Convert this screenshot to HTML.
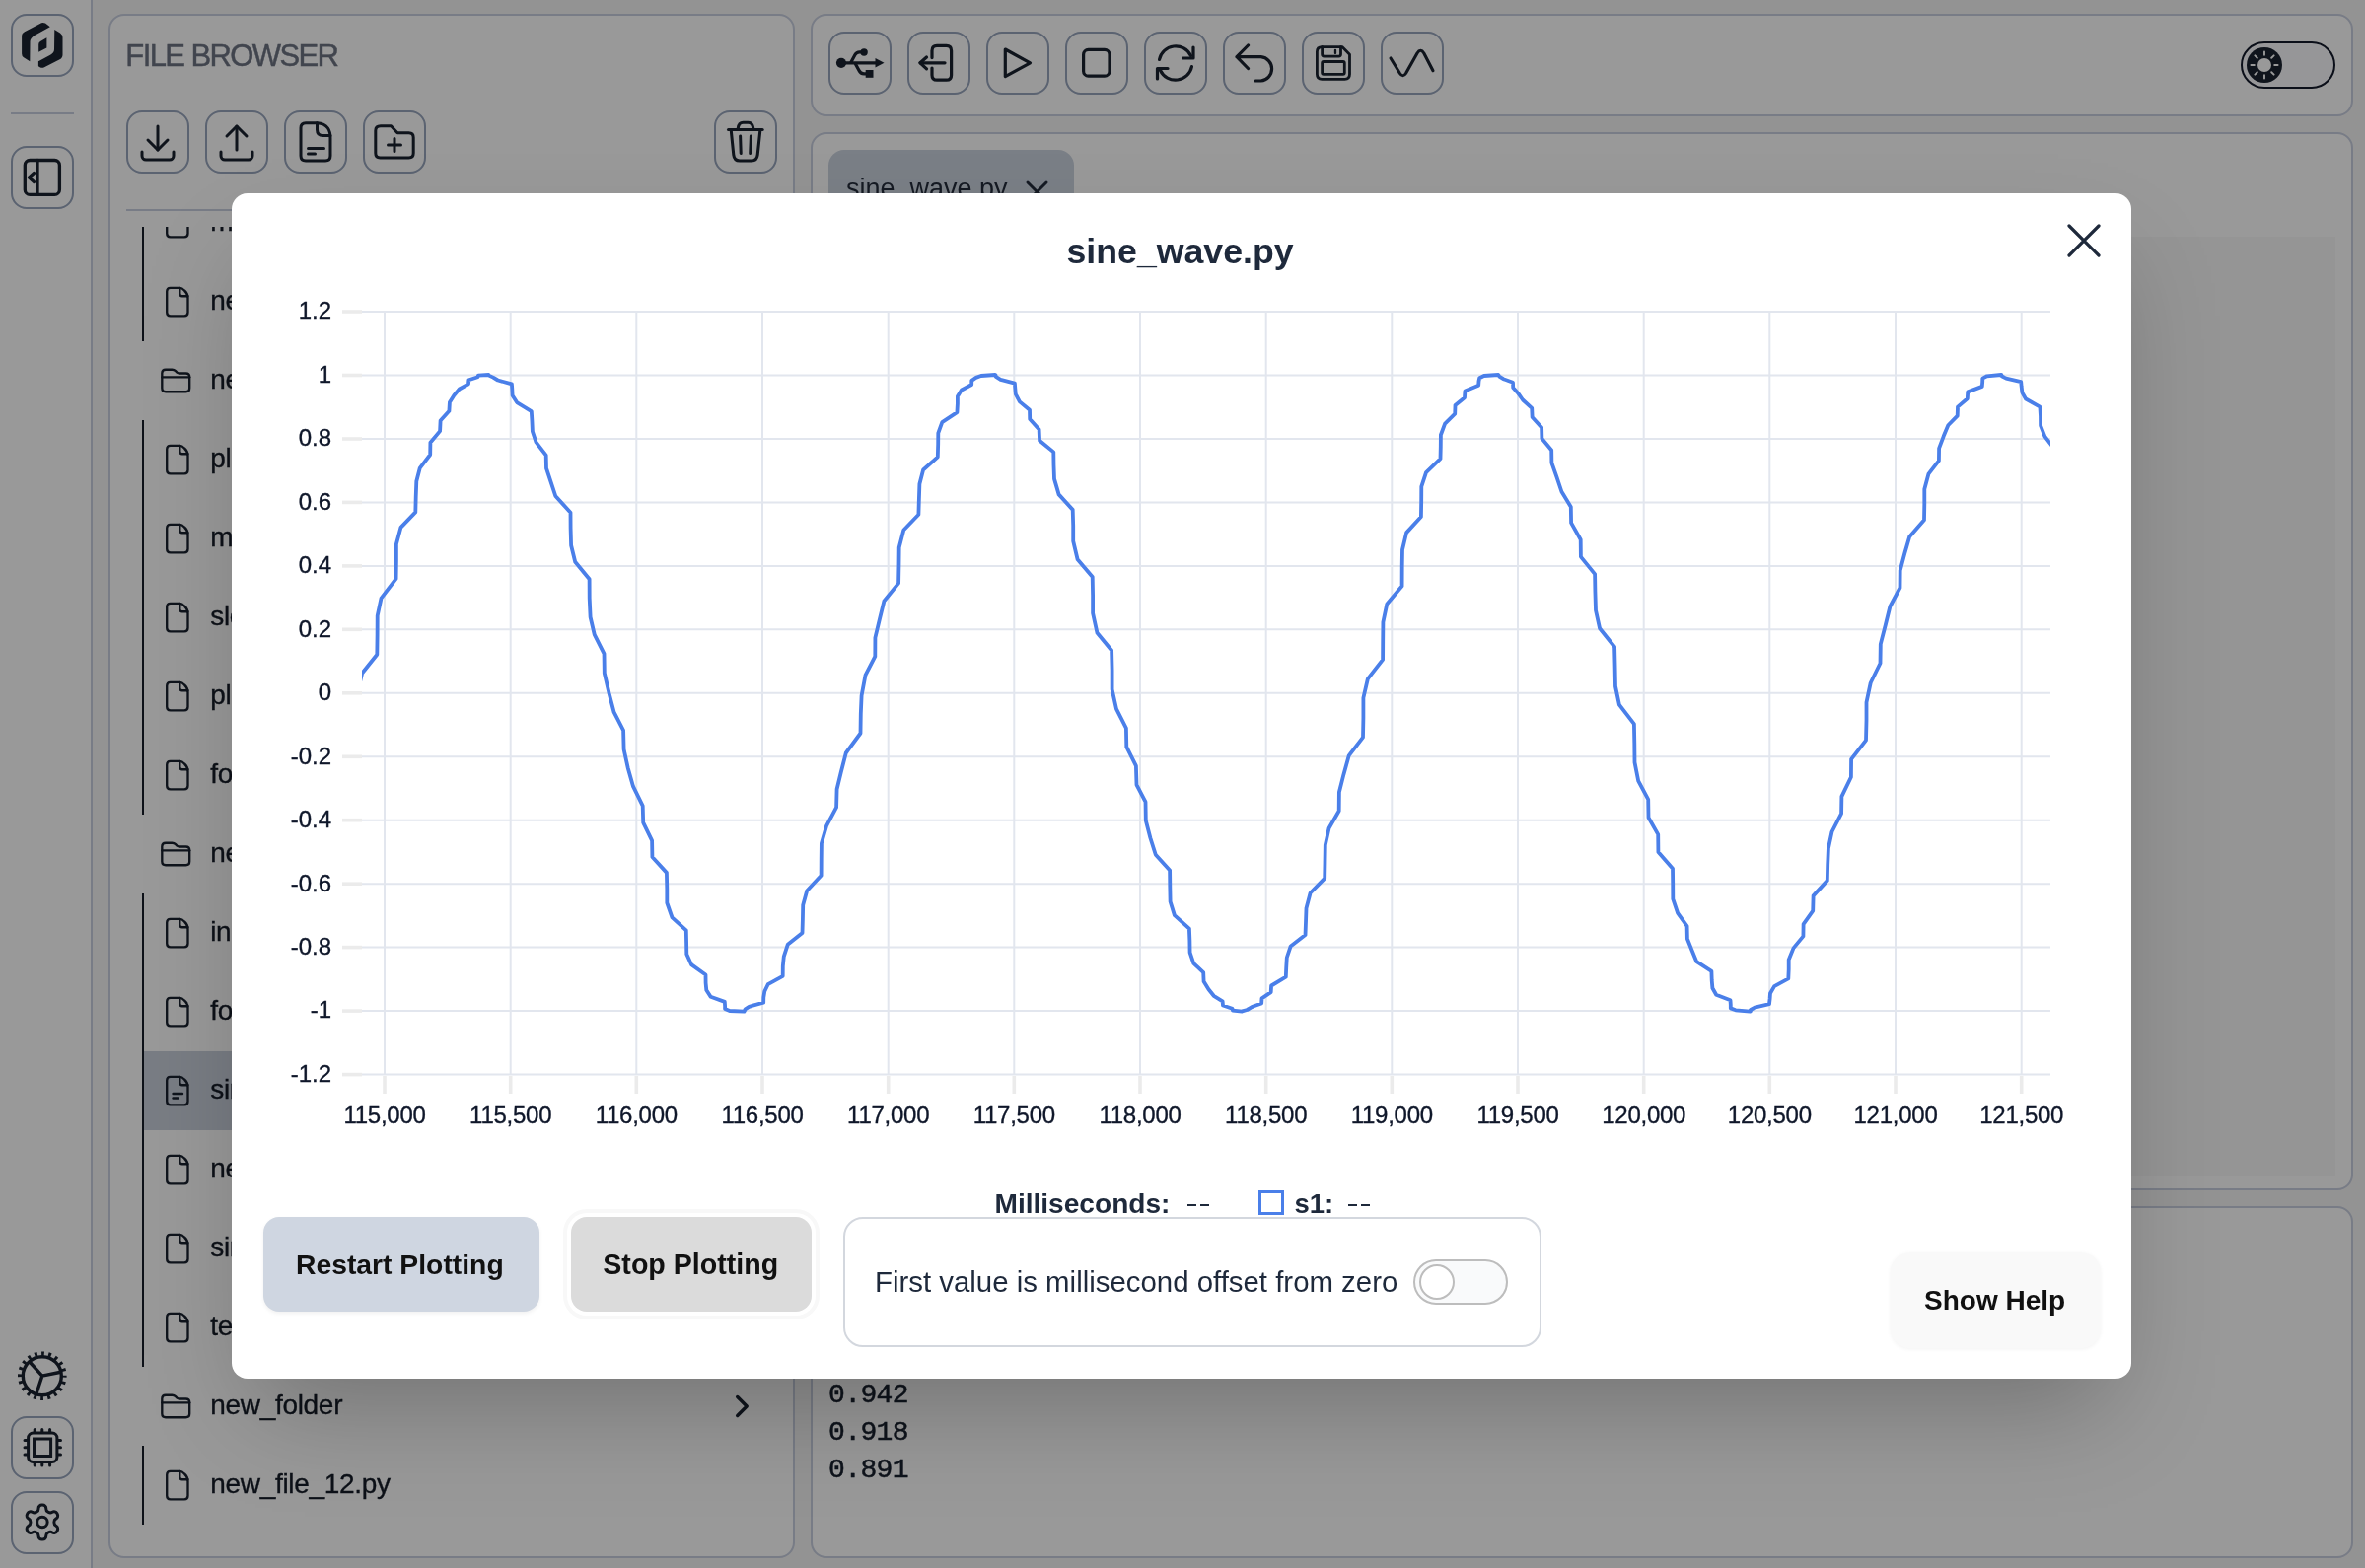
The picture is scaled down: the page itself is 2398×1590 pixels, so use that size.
<!DOCTYPE html>
<html><head><meta charset="utf-8"><style>
html,body{margin:0;padding:0;}
body{width:2398px;height:1590px;overflow:hidden;position:relative;-webkit-font-smoothing:antialiased;background:#939393;font-family:"Liberation Sans",sans-serif;}
.panel{position:absolute;background:#999999;border:2px solid #787c86;}
.ob{position:absolute;border:2px solid #5b6371;}
.t{position:absolute;white-space:nowrap;line-height:1;font-family:"Liberation Sans",sans-serif;}
.mono{font-family:"Liberation Mono",monospace;}
</style></head><body><div id="root" style="position:absolute;left:0;top:0;width:2398px;height:1590px;will-change:transform">
<div style="position:absolute;left:0;top:0;width:92px;height:1590px;background:#999999;border-right:2px solid #787c86"></div><div class="panel" style="left:110px;top:14px;width:692px;height:1562px;border-radius:16px"></div><div class="panel" style="left:822px;top:14px;width:1560px;height:100px;border-radius:16px"></div><div class="panel" style="left:822px;top:134px;width:1560px;height:1069px;border-radius:16px"></div><div class="panel" style="left:822px;top:1223px;width:1560px;height:353px;border-radius:16px"></div><div style="position:absolute;left:840px;top:240px;width:1528px;height:953px;background:#959595"></div><div style="position:absolute;left:840px;top:152px;width:249px;height:70px;background:#7a7f86;border-radius:16px 16px 0 0"></div><div class="t" style="left:858px;top:177.64px;font-size:27px;font-weight:400;color:#151a23;">sine_wave.py</div><svg style="position:absolute;left:1030px;top:175px" width="40" height="40"><path d="M12 10 L31 29 M31 10 L12 29" stroke="#151a23" stroke-width="3" stroke-linecap="round"/></svg><div class="ob" style="left:11px;top:14px;width:60px;height:60px;border-radius:16px"></div><div class="ob" style="left:11px;top:148px;width:60px;height:60px;border-radius:16px"></div><div class="ob" style="left:11px;top:1436px;width:60px;height:60px;border-radius:16px"></div><div class="ob" style="left:11px;top:1512px;width:60px;height:60px;border-radius:16px"></div><div style="position:absolute;left:11px;top:114px;width:64px;height:2px;background:#787c86"></div><div class="t" style="left:127.3px;top:40.76px;font-size:31px;font-weight:400;color:#41454e;letter-spacing:-1.6px;-webkit-text-stroke:0.45px #41454e;">FILE BROWSER</div><div class="ob" style="left:128px;top:112px;width:60px;height:60px;border-radius:16px"></div><div class="ob" style="left:208px;top:112px;width:60px;height:60px;border-radius:16px"></div><div class="ob" style="left:288px;top:112px;width:60px;height:60px;border-radius:16px"></div><div class="ob" style="left:368px;top:112px;width:60px;height:60px;border-radius:16px"></div><div class="ob" style="left:724px;top:112px;width:60px;height:60px;border-radius:16px"></div><div style="position:absolute;left:128px;top:212px;width:660px;height:2px;background:#787c86"></div><div style="position:absolute;left:112px;top:230px;width:692px;height:1340px;overflow:hidden"><div style="position:absolute;left:-112px;top:-230px;width:2398px;height:1590px"><div class="t" style="left:213.2px;top:210.90px;font-size:28px;font-weight:400;color:#0d1118;letter-spacing:-0.3px;-webkit-text-stroke:0.35px #0d1118;">main.py</div><div class="t" style="left:213.2px;top:290.90px;font-size:28px;font-weight:400;color:#0d1118;letter-spacing:-0.3px;-webkit-text-stroke:0.35px #0d1118;">new_file_3.py</div><div class="t" style="left:213.2px;top:370.90px;font-size:28px;font-weight:400;color:#0d1118;letter-spacing:-0.3px;-webkit-text-stroke:0.35px #0d1118;">new_folder_2</div><div class="t" style="left:213.2px;top:450.90px;font-size:28px;font-weight:400;color:#0d1118;letter-spacing:-0.3px;-webkit-text-stroke:0.35px #0d1118;">plot_test.py</div><div class="t" style="left:213.2px;top:530.90px;font-size:28px;font-weight:400;color:#0d1118;letter-spacing:-0.3px;-webkit-text-stroke:0.35px #0d1118;">main.py</div><div class="t" style="left:213.2px;top:610.90px;font-size:28px;font-weight:400;color:#0d1118;letter-spacing:-0.3px;-webkit-text-stroke:0.35px #0d1118;">slow_sine.py</div><div class="t" style="left:213.2px;top:690.90px;font-size:28px;font-weight:400;color:#0d1118;letter-spacing:-0.3px;-webkit-text-stroke:0.35px #0d1118;">plotter.py</div><div class="t" style="left:213.2px;top:770.90px;font-size:28px;font-weight:400;color:#0d1118;letter-spacing:-0.3px;-webkit-text-stroke:0.35px #0d1118;">foo.py</div><div class="t" style="left:213.2px;top:850.90px;font-size:28px;font-weight:400;color:#0d1118;letter-spacing:-0.3px;-webkit-text-stroke:0.35px #0d1118;">new_folder_3</div><div class="t" style="left:213.2px;top:930.90px;font-size:28px;font-weight:400;color:#0d1118;letter-spacing:-0.3px;-webkit-text-stroke:0.35px #0d1118;">index.py</div><div class="t" style="left:213.2px;top:1010.90px;font-size:28px;font-weight:400;color:#0d1118;letter-spacing:-0.3px;-webkit-text-stroke:0.35px #0d1118;">foo2.py</div><div style="position:absolute;left:146px;top:1066px;width:658px;height:80px;background:#797d84"></div><div class="t" style="left:213.2px;top:1090.90px;font-size:28px;font-weight:400;color:#0d1118;letter-spacing:-0.3px;-webkit-text-stroke:0.35px #0d1118;">sine_wave.py</div><div class="t" style="left:213.2px;top:1170.90px;font-size:28px;font-weight:400;color:#0d1118;letter-spacing:-0.3px;-webkit-text-stroke:0.35px #0d1118;">new_file.py</div><div class="t" style="left:213.2px;top:1250.90px;font-size:28px;font-weight:400;color:#0d1118;letter-spacing:-0.3px;-webkit-text-stroke:0.35px #0d1118;">sine2.py</div><div class="t" style="left:213.2px;top:1330.90px;font-size:28px;font-weight:400;color:#0d1118;letter-spacing:-0.3px;-webkit-text-stroke:0.35px #0d1118;">test.py</div><div class="t" style="left:213.2px;top:1410.90px;font-size:28px;font-weight:400;color:#0d1118;letter-spacing:-0.3px;-webkit-text-stroke:0.35px #0d1118;">new_folder</div><div class="t" style="left:213.2px;top:1490.90px;font-size:28px;font-weight:400;color:#0d1118;letter-spacing:-0.3px;-webkit-text-stroke:0.35px #0d1118;">new_file_12.py</div><div style="position:absolute;left:144px;top:186px;width:2px;height:160px;background:#0d1118"></div><div style="position:absolute;left:144px;top:426px;width:2px;height:400px;background:#0d1118"></div><div style="position:absolute;left:144px;top:906px;width:2px;height:480px;background:#0d1118"></div><div style="position:absolute;left:144px;top:1466px;width:2px;height:80px;background:#0d1118"></div></div></div><div class="ob" style="left:840px;top:32px;width:60px;height:60px;border-radius:16px"></div><div class="ob" style="left:920px;top:32px;width:60px;height:60px;border-radius:16px"></div><div class="ob" style="left:1000px;top:32px;width:60px;height:60px;border-radius:16px"></div><div class="ob" style="left:1080px;top:32px;width:60px;height:60px;border-radius:16px"></div><div class="ob" style="left:1160px;top:32px;width:60px;height:60px;border-radius:16px"></div><div class="ob" style="left:1240px;top:32px;width:60px;height:60px;border-radius:16px"></div><div class="ob" style="left:1320px;top:32px;width:60px;height:60px;border-radius:16px"></div><div class="ob" style="left:1400px;top:32px;width:60px;height:60px;border-radius:16px"></div><div style="position:absolute;left:2272px;top:42px;width:92px;height:44px;border:2px solid #0b0f19;border-radius:24px;background:#969698"></div><div class="t mono" style="left:840px;top:1400.54px;font-size:28px;font-weight:400;color:#0f141c;-webkit-text-stroke:0.5px #0f141c;letter-spacing:-0.6px;">0.942</div><div class="t mono" style="left:840px;top:1439.14px;font-size:28px;font-weight:400;color:#0f141c;-webkit-text-stroke:0.5px #0f141c;letter-spacing:-0.6px;">0.918</div><div class="t mono" style="left:840px;top:1476.94px;font-size:28px;font-weight:400;color:#0f141c;-webkit-text-stroke:0.5px #0f141c;letter-spacing:-0.6px;">0.891</div><svg style="position:absolute;left:0;top:0" width="2398" height="1590"><defs><clipPath id="fl"><rect x="112" y="230" width="692" height="1340"/></clipPath></defs><g transform="translate(136,120) scale(2)" stroke="#0f141c" fill="none" stroke-width="1.5" stroke-linecap="round" stroke-linejoin="round"><path d="M4 17v2a2 2 0 0 0 2 2h12a2 2 0 0 0 2 -2v-2"/><path d="M7 11l5 5l5 -5"/><path d="M12 4l0 12"/></g><g transform="translate(216,120) scale(2)" stroke="#0f141c" fill="none" stroke-width="1.5" stroke-linecap="round" stroke-linejoin="round"><path d="M4 17v2a2 2 0 0 0 2 2h12a2 2 0 0 0 2 -2v-2"/><path d="M7 9l5 -5l5 5"/><path d="M12 4l0 12"/></g><g stroke="#0f141c" fill="none" stroke-width="3" stroke-linecap="round" stroke-linejoin="round"><path d="M330 163 H310 Q305 163 305 158 V129.7 Q305 124.7 310 124.7 H321.5 Q329 125 332.5 130 Q335 133.5 335 140 V158 Q335 163 330 163 Z"/><path d="M321.5 124.7 V131.5 Q321.5 137.5 327.5 137.5 H335"/><path d="M312.5 150.5 H328.5"/><path d="M312.5 156 H319.5"/></g><g stroke="#0f141c" fill="none" stroke-width="3" stroke-linecap="round" stroke-linejoin="round"><path d="M386 127.8 H396.5 L403 134.7 H414.5 Q419.2 134.7 419.2 139.4 V155.3 Q419.2 160 414.5 160 H385.5 Q380.8 160 380.8 155.3 V132.5 Q380.8 127.8 386 127.8 Z"/><path d="M393.5 147 H406.5 M400 140.5 V153.5"/></g><g stroke="#0f141c" fill="none" stroke-width="3" stroke-linecap="round" stroke-linejoin="round"><path d="M738.5 131.6 H773.2"/><path d="M741.3 132.5 L743.8 157 Q744.5 163 750 163 H762 Q767.5 163 768.2 157 L770.8 132.5"/><path d="M750.6 138 L751.2 155.5 M761.4 138 L760.7 155.5"/><path d="M748.3 130 Q749 124.3 753.5 124.3 H758.5 Q763 124.3 763.7 130"/></g><g stroke="#0f141c" fill="none" stroke-width="3.3" stroke-linecap="round" stroke-linejoin="round"><rect x="25.3" y="162.5" width="35.1" height="34.9" rx="5"/><path d="M38 162.5V197.4"/><path d="M34.5 175.5L29.5 180L34.5 184.5"/></g><g stroke="#0f141c" fill="none" stroke-width="3" stroke-linecap="round" stroke-linejoin="round"><rect x="28.6" y="1453" width="29.3" height="29.4" rx="5"/><rect x="34.5" y="1459" width="17.1" height="17.5" stroke-linejoin="miter"/><path d="M35.2 1449.5V1452 M42.8 1449.5V1452 M50.6 1449.5V1452 M35.2 1483.5V1486 M42.8 1483.5V1486 M50.6 1483.5V1486 M25 1460.4H27.5 M25 1467.8H27.5 M25 1475.1H27.5 M59 1460.4H61.5 M59 1467.8H61.5 M59 1475.1H61.5"/></g><g transform="translate(21.9,1522.6) scale(1.75)" stroke="#0f141c" fill="none" stroke-width="1.5" stroke-linecap="round" stroke-linejoin="round"><g stroke-width="1.7"><path d="M12.22 2h-.44a2 2 0 0 0-2 2v.18a2 2 0 0 1-1 1.73l-.43.25a2 2 0 0 1-2 0l-.15-.08a2 2 0 0 0-2.73.73l-.22.38a2 2 0 0 0 .73 2.73l.15.1a2 2 0 0 1 1 1.72v.51a2 2 0 0 1-1 1.74l-.15.09a2 2 0 0 0-.73 2.73l.22.38a2 2 0 0 0 2.73.73l.15-.08a2 2 0 0 1 2 0l.43.25a2 2 0 0 1 1 1.73V20a2 2 0 0 0 2 2h.44a2 2 0 0 0 2-2v-.18a2 2 0 0 1 1-1.73l.43-.25a2 2 0 0 1 2 0l.15.08a2 2 0 0 0 2.73-.73l.22-.39a2 2 0 0 0-.73-2.73l-.15-.08a2 2 0 0 1-1-1.74v-.5a2 2 0 0 1 1-1.74l.15-.09a2 2 0 0 0 .73-2.73l-.22-.38a2 2 0 0 0-2.73-.73l-.15.08a2 2 0 0 1-2 0l-.43-.25a2 2 0 0 1-1-1.73V4a2 2 0 0 0-2-2z"/><circle cx="12" cy="12" r="3"/></g></g><g stroke="#0f141c" fill="none" stroke-width="3.2" stroke-linecap="round" stroke-linejoin="round"><path d="M1019.3 50 L1044.5 63.8 L1019.3 77.6 Z"/></g><g stroke="#0f141c" fill="none" stroke-width="3.2" stroke-linecap="round" stroke-linejoin="round"><rect x="1098.6" y="50.4" width="26.4" height="26.8" rx="5"/></g><g stroke="#0f141c" fill="none" stroke-width="3.2" stroke-linecap="round" stroke-linejoin="round"><path d="M945 58.6 V51.4 Q945 46.4 950 46.4 H959.6 Q964.6 46.4 964.6 51.4 V76.2 Q964.6 81.2 959.6 81.2 H950 Q945 81.2 945 76.2 V69"/><path d="M933 63.8 H958"/><path d="M939.5 58 L933 63.8 L939.5 69.9"/></g><g stroke="#0f141c" fill="none" stroke-width="3.2" stroke-linecap="round" stroke-linejoin="round"><path d="M1175.5 60.5 A17 17 0 0 1 1207.5 56.5"/><path d="M1210 48 V59 H1199.5"/><path d="M1208.5 67.5 A17 17 0 0 1 1176.5 71.5"/><path d="M1173.5 80 V69.5 H1184"/></g><g stroke="#0f141c" fill="none" stroke-width="3.2" stroke-linecap="round" stroke-linejoin="round"><path d="M1265.5 46 L1254 57.7 L1265.5 69.5 M1254 57.7 H1278.5 A12.2 12.2 0 0 1 1278.5 82 H1273"/></g><g stroke="#0f141c" fill="none" stroke-width="2.8" stroke-linecap="round" stroke-linejoin="round"><path d="M1340.4 47.6 H1360.9 L1368.5 55.2 V75.3 Q1368.5 80.3 1363.5 80.3 H1340.4 Q1335.4 80.3 1335.4 75.3 V52.6 Q1335.4 47.6 1340.4 47.6 Z"/><path d="M1340.6 47.6 V55.1 Q1340.6 57.1 1342.6 57.1 H1357.5 Q1359.5 57.1 1359.5 55.1 V47.6"/><path d="M1354 51 V54" stroke-width="2.3"/><rect x="1340.6" y="62.5" width="22.7" height="12.8" rx="1.5"/></g><g stroke="#0f141c" fill="none" stroke-width="3.1" stroke-linecap="round" stroke-linejoin="round"><path d="M1410 59 L1419.5 74.5 Q1422.5 79 1425.5 74.5 L1437 54 Q1440.4 48.5 1443.8 54 L1453 71.7"/></g><g fill="#0f141c" stroke="#0f141c" stroke-width="3.2"><circle cx="853" cy="63.8" r="5.1" stroke="none"/><path d="M853 63.8H889" fill="none"/><path d="M887.5 59 L896.5 63.8 L887.5 68.6z" stroke="none"/><circle cx="876.1" cy="53" r="3.7" stroke="none"/><path d="M862.7 63.5 L867 55.5 Q868.5 52.8 871.5 52.8 H874" fill="none"/><path d="M867.2 64.5 L871 71.5 Q872.5 74.8 876 74.8 H878" fill="none"/><rect x="877.7" y="71" width="7.8" height="7.8" stroke="none"/></g><g fill="#0f141c"><path d="M24.9 32.3 L42.1 23.2 Q44 22.6 46 23.6 L50.8 27.2 L34.9 35.9 Q30.6 38.6 30.5 42 L30.3 62.3 L24 58.3 Q22.1 57 22.1 54.5 L22.1 36 Q22.1 33.8 24.9 32.3 Z"/><path d="M55.3 30 L61 33.5 Q63.5 35.5 63.5 38 L63.5 55.5 Q63.5 58.8 60.6 60.3 L45 68.3 Q43 69.3 41 68.5 L38.9 67.3 L38.9 62.3 L51 55.8 Q55 53.5 55 50 L55.3 30 Z"/><path d="M39.2 45 Q39.2 43 41 42 L47.4 38.2 L47.4 48.4 L39.2 52.8 Z"/></g><circle cx="2296" cy="66" r="18" fill="#0f141c"/><circle cx="2296" cy="66" r="7" fill="#999"/><path d="M2306.20 66.00L2309.60 66.00M2303.21 73.21L2305.62 75.62M2296.00 76.20L2296.00 79.60M2288.79 73.21L2286.38 75.62M2285.80 66.00L2282.40 66.00M2288.79 58.79L2286.38 56.38M2296.00 55.80L2296.00 52.40M2303.21 58.79L2305.62 56.38" stroke="#999" stroke-width="1.9" stroke-linecap="round"/><g stroke="#0f141c" fill="none"><circle cx="42.8" cy="1395.2" r="19.5" stroke-width="3.4"/><circle cx="42.8" cy="1395.2" r="22.6" stroke-width="4.4" stroke-dasharray="2.8 4.3" stroke-dashoffset="1.4"/><path d="M42.8 1395.2 L30 1381 M42.8 1395.2 L60.5 1391.5 M42.8 1395.2 L37 1413" stroke-width="3.4" stroke-linecap="round"/></g><g clip-path="url(#fl)"><g stroke="#0f141c" fill="none" stroke-width="2.35" stroke-linecap="round" stroke-linejoin="round"><path d="M182.3 211.9 H172.7 Q169.2 211.9 169.2 215.4 V236.8 Q169.2 240.3 172.7 240.3 H187 Q190.5 240.3 190.5 236.8 V222 Q190.5 217.5 187 214.5 Q184.5 211.9 182.3 211.9 Z"/><path d="M182.3 211.9 V217.7 Q182.3 220.2 184.8 220.2 H190.5"/></g><g stroke="#0f141c" fill="none" stroke-width="2.35" stroke-linecap="round" stroke-linejoin="round"><path d="M182.3 291.9 H172.7 Q169.2 291.9 169.2 295.4 V316.8 Q169.2 320.3 172.7 320.3 H187 Q190.5 320.3 190.5 316.8 V302 Q190.5 297.5 187 294.5 Q184.5 291.9 182.3 291.9 Z"/><path d="M182.3 291.9 V297.7 Q182.3 300.2 184.8 300.2 H190.5"/></g><g stroke="#0f141c" fill="none" stroke-width="2.35" stroke-linecap="round" stroke-linejoin="round" transform="translate(0,0)"><path d="M164.3 382 V378.3 Q164.3 374.7 168 374.7 H174.5 Q176.5 374.7 178 376.2 L179.5 377.7 Q180.5 378.5 182 378.5 H188.5 Q192.2 378.5 192.2 382 V393.5 Q192.2 397.2 188.5 397.2 H168 Q164.3 397.2 164.3 393.5 Z"/><path d="M164.3 382.3 H192.2"/></g><g stroke="#0f141c" fill="none" stroke-width="2.35" stroke-linecap="round" stroke-linejoin="round"><path d="M182.3 451.9 H172.7 Q169.2 451.9 169.2 455.4 V476.8 Q169.2 480.3 172.7 480.3 H187 Q190.5 480.3 190.5 476.8 V462 Q190.5 457.5 187 454.5 Q184.5 451.9 182.3 451.9 Z"/><path d="M182.3 451.9 V457.7 Q182.3 460.2 184.8 460.2 H190.5"/></g><g stroke="#0f141c" fill="none" stroke-width="2.35" stroke-linecap="round" stroke-linejoin="round"><path d="M182.3 531.9 H172.7 Q169.2 531.9 169.2 535.4 V556.8 Q169.2 560.3 172.7 560.3 H187 Q190.5 560.3 190.5 556.8 V542 Q190.5 537.5 187 534.5 Q184.5 531.9 182.3 531.9 Z"/><path d="M182.3 531.9 V537.7 Q182.3 540.2 184.8 540.2 H190.5"/></g><g stroke="#0f141c" fill="none" stroke-width="2.35" stroke-linecap="round" stroke-linejoin="round"><path d="M182.3 611.9 H172.7 Q169.2 611.9 169.2 615.4 V636.8 Q169.2 640.3 172.7 640.3 H187 Q190.5 640.3 190.5 636.8 V622 Q190.5 617.5 187 614.5 Q184.5 611.9 182.3 611.9 Z"/><path d="M182.3 611.9 V617.7 Q182.3 620.2 184.8 620.2 H190.5"/></g><g stroke="#0f141c" fill="none" stroke-width="2.35" stroke-linecap="round" stroke-linejoin="round"><path d="M182.3 691.9 H172.7 Q169.2 691.9 169.2 695.4 V716.8 Q169.2 720.3 172.7 720.3 H187 Q190.5 720.3 190.5 716.8 V702 Q190.5 697.5 187 694.5 Q184.5 691.9 182.3 691.9 Z"/><path d="M182.3 691.9 V697.7 Q182.3 700.2 184.8 700.2 H190.5"/></g><g stroke="#0f141c" fill="none" stroke-width="2.35" stroke-linecap="round" stroke-linejoin="round"><path d="M182.3 771.9 H172.7 Q169.2 771.9 169.2 775.4 V796.8 Q169.2 800.3 172.7 800.3 H187 Q190.5 800.3 190.5 796.8 V782 Q190.5 777.5 187 774.5 Q184.5 771.9 182.3 771.9 Z"/><path d="M182.3 771.9 V777.7 Q182.3 780.2 184.8 780.2 H190.5"/></g><g stroke="#0f141c" fill="none" stroke-width="2.35" stroke-linecap="round" stroke-linejoin="round" transform="translate(0,480)"><path d="M164.3 382 V378.3 Q164.3 374.7 168 374.7 H174.5 Q176.5 374.7 178 376.2 L179.5 377.7 Q180.5 378.5 182 378.5 H188.5 Q192.2 378.5 192.2 382 V393.5 Q192.2 397.2 188.5 397.2 H168 Q164.3 397.2 164.3 393.5 Z"/><path d="M164.3 382.3 H192.2"/></g><g stroke="#0f141c" fill="none" stroke-width="2.35" stroke-linecap="round" stroke-linejoin="round"><path d="M182.3 931.9 H172.7 Q169.2 931.9 169.2 935.4 V956.8 Q169.2 960.3 172.7 960.3 H187 Q190.5 960.3 190.5 956.8 V942 Q190.5 937.5 187 934.5 Q184.5 931.9 182.3 931.9 Z"/><path d="M182.3 931.9 V937.7 Q182.3 940.2 184.8 940.2 H190.5"/></g><g stroke="#0f141c" fill="none" stroke-width="2.35" stroke-linecap="round" stroke-linejoin="round"><path d="M182.3 1011.9 H172.7 Q169.2 1011.9 169.2 1015.4 V1036.8 Q169.2 1040.3 172.7 1040.3 H187 Q190.5 1040.3 190.5 1036.8 V1022 Q190.5 1017.5 187 1014.5 Q184.5 1011.9 182.3 1011.9 Z"/><path d="M182.3 1011.9 V1017.7 Q182.3 1020.2 184.8 1020.2 H190.5"/></g><g stroke="#0f141c" fill="none" stroke-width="2.35" stroke-linecap="round" stroke-linejoin="round"><path d="M182.3 1091.9 H172.7 Q169.2 1091.9 169.2 1095.4 V1116.8 Q169.2 1120.3 172.7 1120.3 H187 Q190.5 1120.3 190.5 1116.8 V1102 Q190.5 1097.5 187 1094.5 Q184.5 1091.9 182.3 1091.9 Z"/><path d="M182.3 1091.9 V1097.7 Q182.3 1100.2 184.8 1100.2 H190.5"/><path d="M175.5 1109 H185"/><path d="M175.5 1113.5 H180.5"/></g><g stroke="#0f141c" fill="none" stroke-width="2.35" stroke-linecap="round" stroke-linejoin="round"><path d="M182.3 1171.9 H172.7 Q169.2 1171.9 169.2 1175.4 V1196.8 Q169.2 1200.3 172.7 1200.3 H187 Q190.5 1200.3 190.5 1196.8 V1182 Q190.5 1177.5 187 1174.5 Q184.5 1171.9 182.3 1171.9 Z"/><path d="M182.3 1171.9 V1177.7 Q182.3 1180.2 184.8 1180.2 H190.5"/></g><g stroke="#0f141c" fill="none" stroke-width="2.35" stroke-linecap="round" stroke-linejoin="round"><path d="M182.3 1251.9 H172.7 Q169.2 1251.9 169.2 1255.4 V1276.8 Q169.2 1280.3 172.7 1280.3 H187 Q190.5 1280.3 190.5 1276.8 V1262 Q190.5 1257.5 187 1254.5 Q184.5 1251.9 182.3 1251.9 Z"/><path d="M182.3 1251.9 V1257.7 Q182.3 1260.2 184.8 1260.2 H190.5"/></g><g stroke="#0f141c" fill="none" stroke-width="2.35" stroke-linecap="round" stroke-linejoin="round"><path d="M182.3 1331.9 H172.7 Q169.2 1331.9 169.2 1335.4 V1356.8 Q169.2 1360.3 172.7 1360.3 H187 Q190.5 1360.3 190.5 1356.8 V1342 Q190.5 1337.5 187 1334.5 Q184.5 1331.9 182.3 1331.9 Z"/><path d="M182.3 1331.9 V1337.7 Q182.3 1340.2 184.8 1340.2 H190.5"/></g><g stroke="#0f141c" fill="none" stroke-width="2.35" stroke-linecap="round" stroke-linejoin="round" transform="translate(0,1040)"><path d="M164.3 382 V378.3 Q164.3 374.7 168 374.7 H174.5 Q176.5 374.7 178 376.2 L179.5 377.7 Q180.5 378.5 182 378.5 H188.5 Q192.2 378.5 192.2 382 V393.5 Q192.2 397.2 188.5 397.2 H168 Q164.3 397.2 164.3 393.5 Z"/><path d="M164.3 382.3 H192.2"/></g><g stroke="#0f141c" fill="none" stroke-width="2.35" stroke-linecap="round" stroke-linejoin="round"><path d="M182.3 1491.9 H172.7 Q169.2 1491.9 169.2 1495.4 V1516.8 Q169.2 1520.3 172.7 1520.3 H187 Q190.5 1520.3 190.5 1516.8 V1502 Q190.5 1497.5 187 1494.5 Q184.5 1491.9 182.3 1491.9 Z"/><path d="M182.3 1491.9 V1497.7 Q182.3 1500.2 184.8 1500.2 H190.5"/></g></g><g transform="translate(733.5,1407) scale(1.58)" stroke="#0f141c" fill="none" stroke-width="1.5" stroke-linecap="round" stroke-linejoin="round"><path d="M9 6l6 6l-6 6" stroke-width="2.2"/></g></svg><div style="position:absolute;left:235px;top:196px;width:1926px;height:1202px;background:#fff;border-radius:16px;box-shadow:0 50px 100px -24px rgba(0,0,0,0.25)"></div><div class="t" style="left:1081.5px;top:237.78px;font-size:35.7px;font-weight:700;color:#1e293b;">sine_wave.py</div><svg style="position:absolute;left:2090px;top:221px" width="46" height="46"><path d="M8 8L38 38M38 8L8 38" stroke="#1e293b" stroke-width="3.2" stroke-linecap="round"/></svg><svg style="position:absolute;left:0;top:0" width="2398" height="1590"><defs><clipPath id="pa"><rect x="367" y="300" width="1712" height="800"/></clipPath></defs><path d="M347 316.0H367" stroke="#ebebeb" stroke-width="3.6"/><path d="M367 316.0H2079" stroke="#e2e6ee" stroke-width="2"/><path d="M347 380.5H367" stroke="#ebebeb" stroke-width="3.6"/><path d="M367 380.5H2079" stroke="#e2e6ee" stroke-width="2"/><path d="M347 445.0H367" stroke="#ebebeb" stroke-width="3.6"/><path d="M367 445.0H2079" stroke="#e2e6ee" stroke-width="2"/><path d="M347 509.4H367" stroke="#ebebeb" stroke-width="3.6"/><path d="M367 509.4H2079" stroke="#e2e6ee" stroke-width="2"/><path d="M347 573.9H367" stroke="#ebebeb" stroke-width="3.6"/><path d="M367 573.9H2079" stroke="#e2e6ee" stroke-width="2"/><path d="M347 638.3H367" stroke="#ebebeb" stroke-width="3.6"/><path d="M367 638.3H2079" stroke="#e2e6ee" stroke-width="2"/><path d="M347 702.8H367" stroke="#ebebeb" stroke-width="3.6"/><path d="M367 702.8H2079" stroke="#e2e6ee" stroke-width="2"/><path d="M347 767.3H367" stroke="#ebebeb" stroke-width="3.6"/><path d="M367 767.3H2079" stroke="#e2e6ee" stroke-width="2"/><path d="M347 831.7H367" stroke="#ebebeb" stroke-width="3.6"/><path d="M367 831.7H2079" stroke="#e2e6ee" stroke-width="2"/><path d="M347 896.2H367" stroke="#ebebeb" stroke-width="3.6"/><path d="M367 896.2H2079" stroke="#e2e6ee" stroke-width="2"/><path d="M347 960.6H367" stroke="#ebebeb" stroke-width="3.6"/><path d="M367 960.6H2079" stroke="#e2e6ee" stroke-width="2"/><path d="M347 1025.1H367" stroke="#ebebeb" stroke-width="3.6"/><path d="M367 1025.1H2079" stroke="#e2e6ee" stroke-width="2"/><path d="M347 1089.6H367" stroke="#ebebeb" stroke-width="3.6"/><path d="M367 1089.6H2079" stroke="#e2e6ee" stroke-width="2"/><path d="M390.0 316V1090" stroke="#e2e6ee" stroke-width="2"/><path d="M390.0 1091V1109" stroke="#ebebeb" stroke-width="3.6"/><path d="M517.7 316V1090" stroke="#e2e6ee" stroke-width="2"/><path d="M517.7 1091V1109" stroke="#ebebeb" stroke-width="3.6"/><path d="M645.3 316V1090" stroke="#e2e6ee" stroke-width="2"/><path d="M645.3 1091V1109" stroke="#ebebeb" stroke-width="3.6"/><path d="M773.0 316V1090" stroke="#e2e6ee" stroke-width="2"/><path d="M773.0 1091V1109" stroke="#ebebeb" stroke-width="3.6"/><path d="M900.7 316V1090" stroke="#e2e6ee" stroke-width="2"/><path d="M900.7 1091V1109" stroke="#ebebeb" stroke-width="3.6"/><path d="M1028.3 316V1090" stroke="#e2e6ee" stroke-width="2"/><path d="M1028.3 1091V1109" stroke="#ebebeb" stroke-width="3.6"/><path d="M1156.0 316V1090" stroke="#e2e6ee" stroke-width="2"/><path d="M1156.0 1091V1109" stroke="#ebebeb" stroke-width="3.6"/><path d="M1283.7 316V1090" stroke="#e2e6ee" stroke-width="2"/><path d="M1283.7 1091V1109" stroke="#ebebeb" stroke-width="3.6"/><path d="M1411.3 316V1090" stroke="#e2e6ee" stroke-width="2"/><path d="M1411.3 1091V1109" stroke="#ebebeb" stroke-width="3.6"/><path d="M1539.0 316V1090" stroke="#e2e6ee" stroke-width="2"/><path d="M1539.0 1091V1109" stroke="#ebebeb" stroke-width="3.6"/><path d="M1666.7 316V1090" stroke="#e2e6ee" stroke-width="2"/><path d="M1666.7 1091V1109" stroke="#ebebeb" stroke-width="3.6"/><path d="M1794.3 316V1090" stroke="#e2e6ee" stroke-width="2"/><path d="M1794.3 1091V1109" stroke="#ebebeb" stroke-width="3.6"/><path d="M1922.0 316V1090" stroke="#e2e6ee" stroke-width="2"/><path d="M1922.0 1091V1109" stroke="#ebebeb" stroke-width="3.6"/><path d="M2049.7 316V1090" stroke="#e2e6ee" stroke-width="2"/><path d="M2049.7 1091V1109" stroke="#ebebeb" stroke-width="3.6"/><text x="336" y="323.3" text-anchor="end" font-family="Liberation Sans" font-size="24" fill="#0f172a" stroke="#0f172a" stroke-width="0.35">1.2</text><text x="336" y="387.8" text-anchor="end" font-family="Liberation Sans" font-size="24" fill="#0f172a" stroke="#0f172a" stroke-width="0.35">1</text><text x="336" y="452.3" text-anchor="end" font-family="Liberation Sans" font-size="24" fill="#0f172a" stroke="#0f172a" stroke-width="0.35">0.8</text><text x="336" y="516.7" text-anchor="end" font-family="Liberation Sans" font-size="24" fill="#0f172a" stroke="#0f172a" stroke-width="0.35">0.6</text><text x="336" y="581.2" text-anchor="end" font-family="Liberation Sans" font-size="24" fill="#0f172a" stroke="#0f172a" stroke-width="0.35">0.4</text><text x="336" y="645.6" text-anchor="end" font-family="Liberation Sans" font-size="24" fill="#0f172a" stroke="#0f172a" stroke-width="0.35">0.2</text><text x="336" y="710.1" text-anchor="end" font-family="Liberation Sans" font-size="24" fill="#0f172a" stroke="#0f172a" stroke-width="0.35">0</text><text x="336" y="774.6" text-anchor="end" font-family="Liberation Sans" font-size="24" fill="#0f172a" stroke="#0f172a" stroke-width="0.35">-0.2</text><text x="336" y="839.0" text-anchor="end" font-family="Liberation Sans" font-size="24" fill="#0f172a" stroke="#0f172a" stroke-width="0.35">-0.4</text><text x="336" y="903.5" text-anchor="end" font-family="Liberation Sans" font-size="24" fill="#0f172a" stroke="#0f172a" stroke-width="0.35">-0.6</text><text x="336" y="967.9" text-anchor="end" font-family="Liberation Sans" font-size="24" fill="#0f172a" stroke="#0f172a" stroke-width="0.35">-0.8</text><text x="336" y="1032.4" text-anchor="end" font-family="Liberation Sans" font-size="24" fill="#0f172a" stroke="#0f172a" stroke-width="0.35">-1</text><text x="336" y="1096.9" text-anchor="end" font-family="Liberation Sans" font-size="24" fill="#0f172a" stroke="#0f172a" stroke-width="0.35">-1.2</text><text x="390.0" y="1139" text-anchor="middle" font-family="Liberation Sans" font-size="24" letter-spacing="-0.25" fill="#0f172a" stroke="#0f172a" stroke-width="0.35">115,000</text><text x="517.7" y="1139" text-anchor="middle" font-family="Liberation Sans" font-size="24" letter-spacing="-0.25" fill="#0f172a" stroke="#0f172a" stroke-width="0.35">115,500</text><text x="645.3" y="1139" text-anchor="middle" font-family="Liberation Sans" font-size="24" letter-spacing="-0.25" fill="#0f172a" stroke="#0f172a" stroke-width="0.35">116,000</text><text x="773.0" y="1139" text-anchor="middle" font-family="Liberation Sans" font-size="24" letter-spacing="-0.25" fill="#0f172a" stroke="#0f172a" stroke-width="0.35">116,500</text><text x="900.7" y="1139" text-anchor="middle" font-family="Liberation Sans" font-size="24" letter-spacing="-0.25" fill="#0f172a" stroke="#0f172a" stroke-width="0.35">117,000</text><text x="1028.3" y="1139" text-anchor="middle" font-family="Liberation Sans" font-size="24" letter-spacing="-0.25" fill="#0f172a" stroke="#0f172a" stroke-width="0.35">117,500</text><text x="1156.0" y="1139" text-anchor="middle" font-family="Liberation Sans" font-size="24" letter-spacing="-0.25" fill="#0f172a" stroke="#0f172a" stroke-width="0.35">118,000</text><text x="1283.7" y="1139" text-anchor="middle" font-family="Liberation Sans" font-size="24" letter-spacing="-0.25" fill="#0f172a" stroke="#0f172a" stroke-width="0.35">118,500</text><text x="1411.3" y="1139" text-anchor="middle" font-family="Liberation Sans" font-size="24" letter-spacing="-0.25" fill="#0f172a" stroke="#0f172a" stroke-width="0.35">119,000</text><text x="1539.0" y="1139" text-anchor="middle" font-family="Liberation Sans" font-size="24" letter-spacing="-0.25" fill="#0f172a" stroke="#0f172a" stroke-width="0.35">119,500</text><text x="1666.7" y="1139" text-anchor="middle" font-family="Liberation Sans" font-size="24" letter-spacing="-0.25" fill="#0f172a" stroke="#0f172a" stroke-width="0.35">120,000</text><text x="1794.3" y="1139" text-anchor="middle" font-family="Liberation Sans" font-size="24" letter-spacing="-0.25" fill="#0f172a" stroke="#0f172a" stroke-width="0.35">120,500</text><text x="1922.0" y="1139" text-anchor="middle" font-family="Liberation Sans" font-size="24" letter-spacing="-0.25" fill="#0f172a" stroke="#0f172a" stroke-width="0.35">121,000</text><text x="2049.7" y="1139" text-anchor="middle" font-family="Liberation Sans" font-size="24" letter-spacing="-0.25" fill="#0f172a" stroke="#0f172a" stroke-width="0.35">121,500</text><path d="M362.0 740.6 L362.4 720.9 L362.5 702.5 L367.1 682.8 L382.3 663.7 L382.6 643.1 L382.7 624.4 L386.5 606.6 L401.6 586.9 L401.9 568.8 L401.9 551.7 L406.4 534.9 L421.3 519.4 L421.7 504.0 L422.3 488.1 L425.8 474.6 L436.2 461.0 L436.4 448.8 L446.1 437.1 L446.6 426.5 L455.4 416.8 L455.9 408.1 L460.3 401.0 L465.7 394.5 L475.0 389.4 L475.4 385.2 L484.5 382.3 L484.9 380.6 L495.4 380.0 L495.7 380.6 L500.0 382.6 L504.8 385.5 L518.9 389.4 L519.3 394.5 L519.6 401.0 L524.1 408.1 L538.8 417.1 L539.4 426.5 L539.9 437.5 L543.5 448.4 L553.7 461.7 L554.0 474.9 L558.3 487.8 L563.3 503.0 L578.5 519.8 L578.6 535.6 L579.1 553.0 L583.2 569.8 L597.6 587.2 L597.7 606.6 L598.6 625.7 L602.8 643.7 L612.5 662.8 L612.8 682.5 L617.5 702.8 L622.6 722.2 L632.1 740.6 L632.6 759.9 L636.7 778.7 L642.0 797.4 L651.7 817.1 L652.2 834.2 L661.1 852.3 L661.4 869.0 L675.9 884.9 L676.3 901.3 L676.3 915.5 L681.5 930.4 L695.8 943.3 L696.1 956.2 L696.3 967.5 L701.0 978.1 L715.5 988.5 L715.6 996.9 L716.3 1004.0 L720.6 1010.8 L734.8 1015.9 L735.1 1020.1 L735.1 1023.0 L739.8 1025.0 L754.5 1025.6 L754.9 1025.0 L755.6 1023.3 L759.5 1020.8 L774.2 1016.6 L774.3 1011.4 L775.3 1005.3 L778.7 998.2 L793.7 989.8 L793.8 979.8 L794.8 969.8 L798.7 957.8 L813.5 945.9 L813.9 932.3 L814.2 917.8 L818.2 903.3 L832.6 887.8 L832.7 871.0 L832.9 855.2 L838.0 837.7 L848.1 818.7 L848.6 800.3 L852.9 782.5 L857.8 763.5 L872.5 743.5 L872.8 723.8 L873.6 705.4 L877.5 684.7 L887.3 665.7 L887.4 646.6 L891.9 627.9 L896.4 609.5 L911.1 591.4 L911.5 571.7 L911.7 555.3 L916.3 537.5 L931.4 521.7 L931.9 505.2 L932.4 490.7 L936.1 476.5 L950.8 463.3 L951.2 450.0 L951.3 439.1 L955.3 428.1 L970.4 418.1 L970.9 409.4 L970.9 402.0 L974.9 395.5 L985.2 390.0 L985.3 385.8 L989.6 382.9 L994.8 381.0 L1009.1 380.0 L1009.5 380.3 L1009.8 381.9 L1014.5 384.8 L1028.9 388.7 L1029.3 393.6 L1029.8 399.7 L1033.9 407.4 L1044.0 415.8 L1044.2 424.9 L1053.6 435.5 L1054.1 446.8 L1068.3 458.4 L1068.5 471.7 L1069.0 485.6 L1073.6 501.4 L1087.7 516.9 L1088.2 533.3 L1088.2 548.8 L1092.6 567.2 L1107.7 585.0 L1108.1 603.7 L1108.1 621.8 L1112.5 641.8 L1127.1 659.5 L1127.6 679.6 L1127.6 699.2 L1132.0 718.9 L1141.9 738.3 L1142.3 757.4 L1151.9 776.7 L1152.5 795.8 L1161.5 813.2 L1161.8 831.9 L1166.4 849.7 L1171.8 866.8 L1186.1 882.6 L1186.3 899.1 L1186.6 914.2 L1190.9 928.1 L1205.9 941.7 L1206.4 953.9 L1206.6 965.9 L1210.3 976.9 L1220.2 986.2 L1220.6 995.3 L1225.5 1003.3 L1230.7 1009.8 L1239.6 1015.3 L1240.0 1019.5 L1249.5 1022.7 L1249.9 1024.6 L1259.4 1025.6 L1259.5 1025.3 L1264.5 1024.0 L1269.3 1021.1 L1279.2 1017.5 L1279.5 1012.4 L1288.7 1006.2 L1289.1 999.5 L1303.8 990.7 L1304.2 981.7 L1304.8 971.0 L1308.7 959.4 L1323.5 948.1 L1324.0 935.2 L1324.5 921.0 L1328.6 905.5 L1343.2 890.7 L1343.5 874.5 L1343.8 856.8 L1347.6 839.7 L1357.7 822.2 L1357.9 803.2 L1362.4 785.4 L1367.8 766.1 L1382.0 747.7 L1382.4 728.0 L1382.4 707.6 L1386.9 688.3 L1402.1 668.9 L1402.2 650.2 L1402.4 630.8 L1406.3 612.4 L1421.6 594.3 L1421.7 575.6 L1422.0 557.5 L1426.1 540.1 L1440.9 524.0 L1441.2 507.8 L1441.3 493.3 L1446.0 479.1 L1460.5 465.2 L1460.8 452.6 L1460.9 441.0 L1465.1 429.7 L1475.2 419.7 L1475.5 411.0 L1485.0 403.2 L1485.4 396.5 L1499.2 390.7 L1499.5 386.5 L1500.2 383.2 L1504.7 381.0 L1519.2 380.0 L1519.4 380.3 L1520.2 381.6 L1524.3 384.2 L1534.0 387.7 L1534.2 392.9 L1539.0 398.4 L1544.0 405.5 L1553.2 413.9 L1553.6 422.9 L1563.1 433.6 L1563.4 444.6 L1573.2 456.5 L1573.4 469.4 L1578.5 483.9 L1583.4 498.5 L1592.8 514.0 L1593.1 530.1 L1602.7 547.2 L1602.9 564.6 L1617.1 582.1 L1617.4 599.8 L1618.0 618.9 L1622.1 637.3 L1637.1 656.0 L1637.6 676.3 L1638.0 696.0 L1641.9 714.7 L1656.9 734.1 L1657.3 753.8 L1657.5 773.2 L1661.2 791.9 L1671.2 810.6 L1671.5 829.0 L1681.2 846.1 L1681.4 863.9 L1696.0 880.7 L1696.2 895.5 L1696.3 911.7 L1701.1 925.9 L1710.6 939.1 L1710.9 952.0 L1715.8 964.3 L1720.3 975.2 L1735.4 984.9 L1735.7 994.0 L1736.4 1002.0 L1740.2 1008.8 L1754.5 1014.3 L1754.8 1018.8 L1754.8 1022.4 L1759.8 1024.3 L1774.5 1025.6 L1775.0 1025.3 L1775.0 1024.0 L1779.2 1021.7 L1794.0 1018.2 L1794.6 1013.0 L1795.0 1007.2 L1799.1 1000.1 L1813.3 992.4 L1813.7 983.0 L1813.7 973.3 L1818.5 961.4 L1828.4 949.4 L1828.6 937.2 L1838.2 923.6 L1838.6 908.4 L1852.8 892.9 L1853.2 876.5 L1853.9 860.3 L1857.5 843.5 L1867.1 824.8 L1867.4 807.7 L1876.9 788.0 L1877.1 769.9 L1892.0 750.6 L1892.5 730.6 L1892.5 712.2 L1896.7 692.5 L1906.5 672.5 L1906.8 653.1 L1911.8 633.7 L1916.4 615.0 L1926.5 596.0 L1926.7 578.5 L1931.6 560.1 L1936.2 544.3 L1951.0 527.2 L1951.3 511.1 L1951.3 495.9 L1955.4 480.7 L1965.9 467.2 L1966.1 454.6 L1970.7 442.3 L1975.3 431.3 L1984.7 421.6 L1985.0 412.6 L1994.8 404.2 L1995.2 397.4 L2009.8 391.9 L2010.2 387.1 L2010.3 383.6 L2014.7 381.3 L2029.0 380.0 L2029.4 380.0 L2029.6 381.3 L2034.1 383.6 L2049.2 387.1 L2049.6 391.6 L2050.4 398.1 L2054.0 404.5 L2068.4 412.6 L2069.0 422.0 L2069.1 431.6 L2073.4 442.6 L2082.9 454.9 L2083.3 467.2 L2088.4 481.4 L2093.0 495.9" stroke="#4a7fe9" stroke-width="3.8" fill="none" stroke-linejoin="round" clip-path="url(#pa)"/></svg><div class="t" style="left:1008.5px;top:1206.91px;font-size:28.1px;font-weight:700;color:#1e293b;">Milliseconds:</div><div style="position:absolute;left:1203.8px;top:1220.6px;width:9px;height:2.8px;background:#1e293b"></div><div style="position:absolute;left:1216.8px;top:1220.6px;width:9px;height:2.8px;background:#1e293b"></div><div style="position:absolute;left:1276px;top:1207px;width:20.4px;height:19.2px;border:3.7px solid #4a7fe9"></div><div class="t" style="left:1312.5px;top:1207.42px;font-size:27.5px;font-weight:700;color:#1e293b;">s1:</div><div style="position:absolute;left:1366.8px;top:1220.6px;width:9px;height:2.8px;background:#1e293b"></div><div style="position:absolute;left:1379.8px;top:1220.6px;width:9px;height:2.8px;background:#1e293b"></div><div style="position:absolute;left:267px;top:1234px;width:280px;height:96px;background:#cfd6e1;border-radius:16px;box-shadow:0 2px 4px rgba(0,0,0,0.06)"></div><div class="t" style="left:300px;top:1268.04px;font-size:28.3px;font-weight:700;color:#111;">Restart Plotting</div><div style="position:absolute;left:579px;top:1234px;width:244px;height:96px;background:#dbdbdb;border-radius:16px;box-shadow:0 0 0 4px #fff,0 0 0 8px #f8f8f8"></div><div class="t" style="left:611.3px;top:1267.79px;font-size:28.6px;font-weight:700;color:#111;">Stop Plotting</div><div style="position:absolute;left:855px;top:1234px;width:704px;height:128px;border:2px solid #d3d7de;border-radius:20px"></div><div class="t" style="left:887px;top:1284.91px;font-size:29.4px;font-weight:400;color:#1e293b;">First value is millisecond offset from zero</div><div style="position:absolute;left:1433px;top:1277px;width:92px;height:42px;border:2px solid #bdbdbd;background:#f9fafb;border-radius:24px"></div><div style="position:absolute;left:1439px;top:1282px;width:32px;height:32px;border:2px solid #bdbdbd;background:#fff;border-radius:50%"></div><div style="position:absolute;left:1917px;top:1270px;width:213px;height:97px;background:#f9f9f9;border-radius:20px;box-shadow:0 1px 4px rgba(0,0,0,0.05)"></div><div class="t" style="left:1951px;top:1304.50px;font-size:28px;font-weight:700;color:#111;">Show Help</div>
</div></body></html>
